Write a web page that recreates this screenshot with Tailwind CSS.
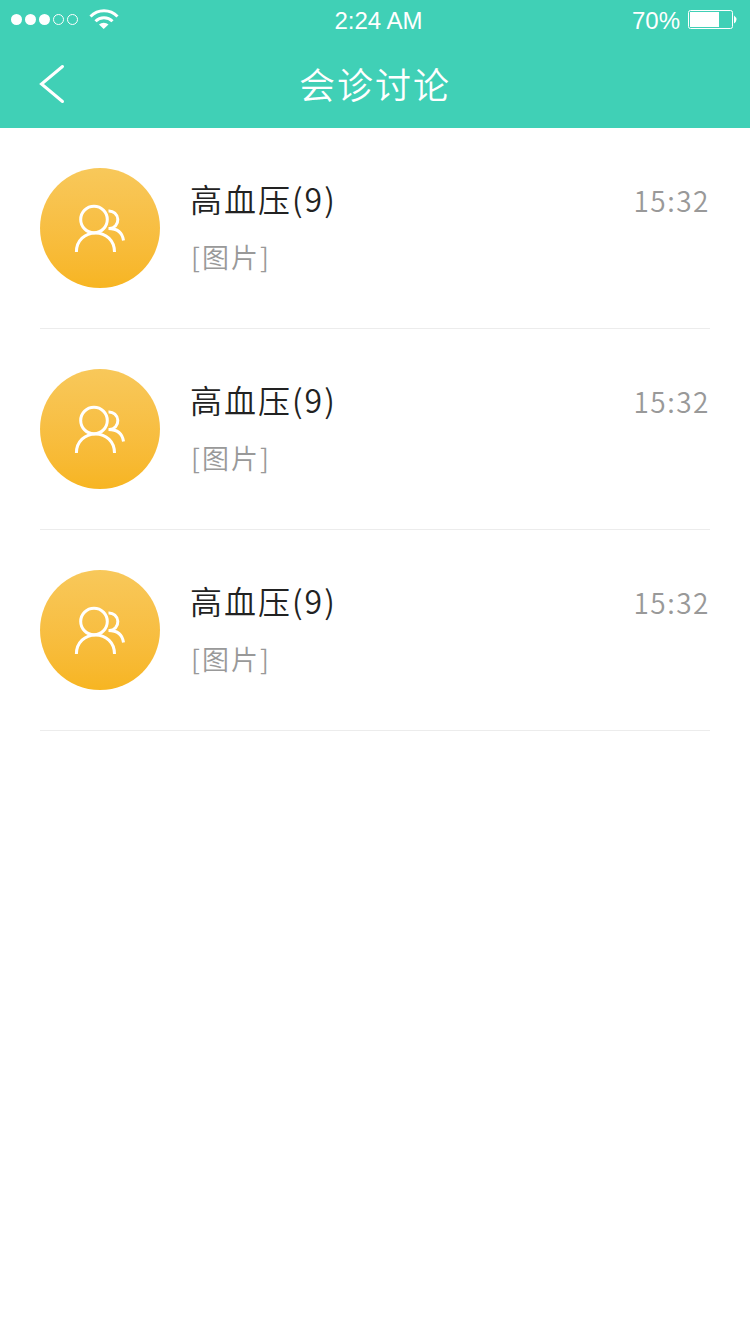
<!DOCTYPE html>
<html lang="zh">
<head>
<meta charset="utf-8">
<title>会诊讨论</title>
<script src="https://cdn.jsdelivr.net/npm/@tailwindcss/browser@4"></script>
</head>
<body class="bg-white font-['Noto_Sans_CJK_SC',sans-serif]">
<svg class="hidden"><defs>
<symbol id="people" viewBox="0 0 54 50"><g fill="none" stroke="#fff" stroke-width="3"><circle cx="21" cy="16.500" r="13.300"/><path d="M3.400 49C3.400 37.500 12 30 22.500 30S41.500 37.500 41.500 49M35.500 8a8.700 8.700 0 1 1 1 17.600M35.500 25.500c9 0 14 4.500 15 12"/></g></symbol>
</defs></svg>
<main class="w-[750px] h-[1334px] overflow-hidden">
<header class="h-32 bg-[#40d0b6] text-white">
<div class="grid grid-cols-3 h-10 font-['Liberation_Sans',sans-serif] text-2xl">
<div class="pl-[10px]"><svg width="112" height="40" viewBox="10 0 112 40" fill="#fff"><circle cx="16.500" cy="19.500" r="5.500"/><circle cx="30.500" cy="19.500" r="5.500"/><circle cx="44.500" cy="19.500" r="5.500"/><g fill="none" stroke="#fff"><circle cx="58.500" cy="19.500" r="5"/><circle cx="72.500" cy="19.500" r="5"/><path stroke-width="3" d="M90.500 16.500a19 19 0 0 1 27 0M95.500 21.300a12 12 0 0 1 17 0"/></g><path d="M99 24.500a7 7 0 0 1 9.500 0L103.700 29z"/></svg></div>
<div class="text-center leading-[42px] pl-[7px]">2:24 AM</div>
<div class="flex justify-end gap-2 pr-[13px] leading-[42px]"><span>70%</span><svg width="49" height="40" viewBox="0 0 49 40"><rect x=".5" y="10.500" width="44" height="18" rx="2" fill="none" stroke="#fff"/><path fill="#fff" d="M2 12h29v15H2zM46 15.500q5 4 0 8z"/></svg></div>
</div>
<div class="grid grid-cols-3 h-[88px] items-center">
<svg class="ml-[38px]" width="28" height="42" viewBox="0 0 28 42" fill="none" stroke="#fff" stroke-width="3" stroke-linecap="round"><path d="M24.500 3.500 3.500 21l21 17.500"/></svg>
<h1 class="text-center text-4xl tracking-[2px] font-[350] -mt-0.5">会诊讨论</h1>
</div>
</header>
<ul class="px-10">
<li class="flex h-[201px] border-b border-[#ececec] pt-10">
<div class="size-30 rounded-full bg-linear-to-b from-[#f8c85a] to-[#f7b521] flex items-center justify-center"><svg width="54" height="50"><use href="#people"/></svg></div>
<div class="ml-[30px] flex-1"><h2 class="text-[32px] tracking-[2px] leading-[60px] font-[350] text-[#222]">高血压(9)</h2><p class="text-[27px] tracking-[2px] leading-[58px] font-[350] text-[#999] pl-px">[图片]</p></div>
<time class="text-[28px] leading-[64px] tracking-[1.5px] font-[350] text-[#999]">15:32</time>
</li>
<li class="flex h-[201px] border-b border-[#ececec] pt-10">
<div class="size-30 rounded-full bg-linear-to-b from-[#f8c85a] to-[#f7b521] flex items-center justify-center"><svg width="54" height="50"><use href="#people"/></svg></div>
<div class="ml-[30px] flex-1"><h2 class="text-[32px] tracking-[2px] leading-[60px] font-[350] text-[#222]">高血压(9)</h2><p class="text-[27px] tracking-[2px] leading-[58px] font-[350] text-[#999] pl-px">[图片]</p></div>
<time class="text-[28px] leading-[64px] tracking-[1.5px] font-[350] text-[#999]">15:32</time>
</li>
<li class="flex h-[201px] border-b border-[#ececec] pt-10">
<div class="size-30 rounded-full bg-linear-to-b from-[#f8c85a] to-[#f7b521] flex items-center justify-center"><svg width="54" height="50"><use href="#people"/></svg></div>
<div class="ml-[30px] flex-1"><h2 class="text-[32px] tracking-[2px] leading-[60px] font-[350] text-[#222]">高血压(9)</h2><p class="text-[27px] tracking-[2px] leading-[58px] font-[350] text-[#999] pl-px">[图片]</p></div>
<time class="text-[28px] leading-[64px] tracking-[1.5px] font-[350] text-[#999]">15:32</time>
</li>
</ul>
</main>
</body>
</html>
